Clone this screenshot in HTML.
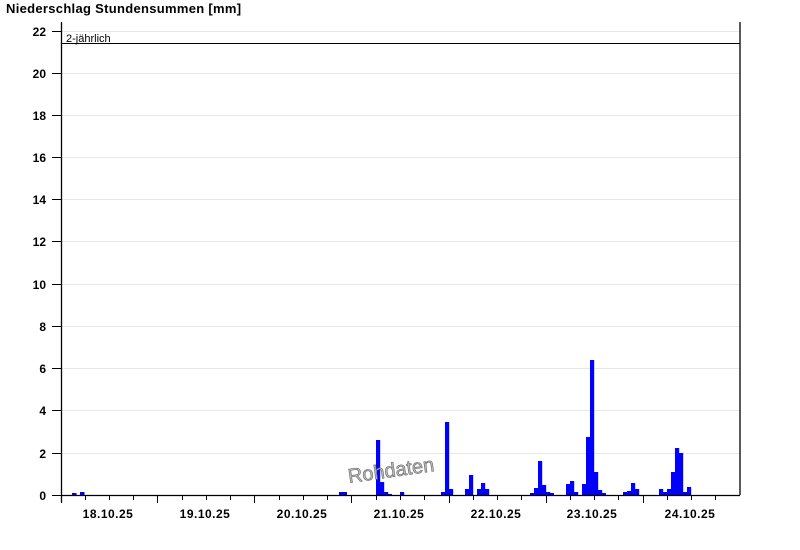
<!DOCTYPE html>
<html><head><style>
body{margin:0;background:#fff;width:800px;height:550px;overflow:hidden}
svg{display:block;font-family:"Liberation Sans",Arial,sans-serif}
</style></head><body>
<svg width="800" height="550" xmlns="http://www.w3.org/2000/svg">
<text x="6" y="13" font-size="13" font-weight="bold" letter-spacing="0.3">Niederschlag Stundensummen [mm]</text>
<g stroke="#e8e8e8" stroke-width="1">
<line x1="61" x2="740" y1="31.5" y2="31.5"/><line x1="61" x2="740" y1="73.5" y2="73.5"/><line x1="61" x2="740" y1="115.5" y2="115.5"/><line x1="61" x2="740" y1="157.5" y2="157.5"/><line x1="61" x2="740" y1="199.5" y2="199.5"/><line x1="61" x2="740" y1="241.5" y2="241.5"/><line x1="61" x2="740" y1="284.5" y2="284.5"/><line x1="61" x2="740" y1="326.5" y2="326.5"/><line x1="61" x2="740" y1="368.5" y2="368.5"/><line x1="61" x2="740" y1="410.5" y2="410.5"/><line x1="61" x2="740" y1="453.5" y2="453.5"/>
</g>
<g font-size="12" font-weight="bold" text-anchor="end">
<text x="46" y="36">22</text><text x="46" y="78">20</text><text x="46" y="120">18</text><text x="46" y="162">16</text><text x="46" y="204">14</text><text x="46" y="246">12</text><text x="46" y="289">10</text><text x="46" y="331">8</text><text x="46" y="373">6</text><text x="46" y="415">4</text><text x="46" y="458">2</text><text x="46" y="500">0</text>
</g>
<g stroke="#000" stroke-width="1">
<line x1="52" x2="61" y1="31.5" y2="31.5"/><line x1="52" x2="61" y1="73.5" y2="73.5"/><line x1="52" x2="61" y1="115.5" y2="115.5"/><line x1="52" x2="61" y1="157.5" y2="157.5"/><line x1="52" x2="61" y1="199.5" y2="199.5"/><line x1="52" x2="61" y1="241.5" y2="241.5"/><line x1="52" x2="61" y1="284.5" y2="284.5"/><line x1="52" x2="61" y1="326.5" y2="326.5"/><line x1="52" x2="61" y1="368.5" y2="368.5"/><line x1="52" x2="61" y1="410.5" y2="410.5"/><line x1="52" x2="61" y1="453.5" y2="453.5"/><line x1="52" x2="61" y1="495.5" y2="495.5"/>
</g>
<g fill="#0000ff">
<rect x="72" y="493" width="4.5" height="2"/><rect x="80" y="492" width="4.5" height="3"/>
<rect x="339" y="492" width="8" height="3"/>
<rect x="376" y="440" width="4.2" height="55"/><rect x="380" y="482" width="4.2" height="13"/><rect x="384" y="492" width="4.2" height="3"/><rect x="388" y="494" width="4" height="1"/>
<rect x="400" y="492" width="4.2" height="3"/>
<rect x="441" y="492" width="4.2" height="3"/><rect x="445" y="422" width="4.2" height="73"/><rect x="449" y="489" width="4.2" height="6"/>
<rect x="465" y="489" width="4.2" height="6"/><rect x="469" y="475" width="4.2" height="20"/><rect x="477" y="489" width="4.2" height="6"/><rect x="481" y="483" width="4.2" height="12"/><rect x="485" y="489" width="4.2" height="6"/>
<rect x="530" y="493" width="4.2" height="2"/><rect x="534" y="488" width="4.2" height="7"/><rect x="538" y="461" width="4.2" height="34"/><rect x="542" y="485" width="4.2" height="10"/><rect x="546" y="492" width="4.2" height="3"/><rect x="550" y="493" width="4" height="2"/>
<rect x="566" y="484" width="4.2" height="11"/><rect x="570" y="481" width="4.2" height="14"/><rect x="574" y="492" width="4.2" height="3"/><rect x="582" y="484" width="4.2" height="11"/><rect x="586" y="437" width="4.2" height="58"/><rect x="590" y="360" width="4.2" height="135"/><rect x="594" y="472" width="4.2" height="23"/><rect x="598" y="490" width="4.2" height="5"/><rect x="602" y="493" width="4" height="2"/>
<rect x="623" y="492" width="4.2" height="3"/><rect x="627" y="491" width="4.2" height="4"/><rect x="631" y="483" width="4.2" height="12"/><rect x="635" y="489" width="4.2" height="6"/>
<rect x="659" y="489" width="4.2" height="6"/><rect x="663" y="492" width="4.2" height="3"/><rect x="667" y="489" width="4.2" height="6"/><rect x="671" y="472" width="4.2" height="23"/><rect x="675" y="448" width="4.2" height="47"/><rect x="679" y="453" width="4.2" height="42"/><rect x="683" y="492" width="4.2" height="3"/><rect x="687" y="487" width="4.2" height="8"/>
</g>
<line x1="61" x2="740" y1="43.5" y2="43.5" stroke="#000"/>
<text x="66" y="42" font-size="11">2-jährlich</text>
<g stroke="#000" stroke-width="1.3" fill="none">
<line x1="61.5" x2="61.5" y1="22" y2="503"/>
<line x1="740" x2="740" y1="22" y2="495"/>
<line x1="61" x2="740" y1="495.5" y2="495.5"/>
</g>
<g stroke="#000" stroke-width="1">
<line x1="85.5" x2="85.5" y1="495" y2="500"/><line x1="109.5" x2="109.5" y1="495" y2="500"/><line x1="133.5" x2="133.5" y1="495" y2="500"/><line x1="157.5" x2="157.5" y1="495" y2="503"/>
<line x1="182.5" x2="182.5" y1="495" y2="500"/><line x1="206.5" x2="206.5" y1="495" y2="500"/><line x1="230.5" x2="230.5" y1="495" y2="500"/><line x1="254.5" x2="254.5" y1="495" y2="503"/>
<line x1="279.5" x2="279.5" y1="495" y2="500"/><line x1="303.5" x2="303.5" y1="495" y2="500"/><line x1="327.5" x2="327.5" y1="495" y2="500"/><line x1="351.5" x2="351.5" y1="495" y2="503"/>
<line x1="376.5" x2="376.5" y1="495" y2="500"/><line x1="400.5" x2="400.5" y1="495" y2="500"/><line x1="424.5" x2="424.5" y1="495" y2="500"/><line x1="449.5" x2="449.5" y1="495" y2="503"/>
<line x1="473.5" x2="473.5" y1="495" y2="500"/><line x1="497.5" x2="497.5" y1="495" y2="500"/><line x1="521.5" x2="521.5" y1="495" y2="500"/><line x1="546.5" x2="546.5" y1="495" y2="503"/>
<line x1="570.5" x2="570.5" y1="495" y2="500"/><line x1="594.5" x2="594.5" y1="495" y2="500"/><line x1="618.5" x2="618.5" y1="495" y2="500"/><line x1="643.5" x2="643.5" y1="495" y2="503"/>
<line x1="667.5" x2="667.5" y1="495" y2="500"/><line x1="691.5" x2="691.5" y1="495" y2="500"/><line x1="715.5" x2="715.5" y1="495" y2="500"/>
</g>
<g font-size="12" font-weight="bold" text-anchor="middle" letter-spacing="0.5">
<text x="108" y="518">18.10.25</text><text x="205" y="518">19.10.25</text><text x="302" y="518">20.10.25</text><text x="399" y="518">21.10.25</text><text x="496" y="518">22.10.25</text><text x="592" y="518">23.10.25</text><text x="690" y="518">24.10.25</text>
</g>
<text x="349" y="483" font-size="20" fill="#bbb" stroke="#666" stroke-width="0.6" transform="rotate(-8 349 483)">Rohdaten</text>
</svg>
</body></html>
